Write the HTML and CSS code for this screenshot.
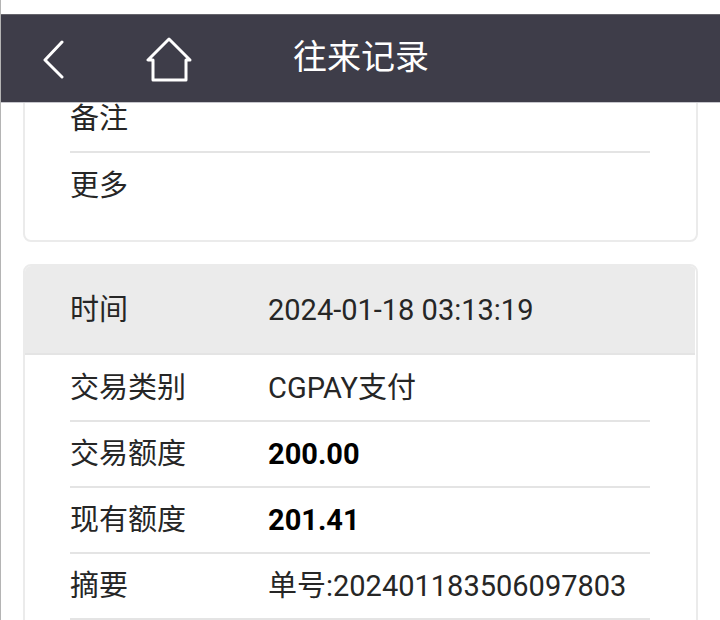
FILE: index.html
```html
<!DOCTYPE html>
<html lang="zh-CN">
<head>
  <meta charset="UTF-8">
  <meta name="viewport" content="width=device-width, initial-scale=1.0">
  <title>往来记录</title>
  <link rel="stylesheet" href="styles.css">
</head>
<body>
  <header class="topbar">
    <button type="button" class="icon-btn back" aria-label="返回">
      <svg width="24" height="40" viewBox="0 0 24 40"><path d="M21 3 4 21l17 17"/></svg>
    </button>
    <a href="#" class="icon-btn home" aria-label="首页">
      <svg width="46" height="46" viewBox="0 0 46 46"><path d="M23 3 2 24h5v20h33V24h4z"/></svg>
    </a>
    <h1>往来记录</h1>
  </header>

  <main class="records">
    <section class="card card-prev">
      <dl>
        <div class="row"><dt>备注</dt><dd></dd></div>
        <div class="row"><dt>更多</dt><dd></dd></div>
      </dl>
    </section>

    <section class="card card-open">
      <dl>
        <div class="row row-head"><dt>时间</dt><dd>2024-01-18 03:13:19</dd></div>
        <div class="row"><dt>交易类别</dt><dd>CGPAY支付</dd></div>
        <div class="row"><dt>交易额度</dt><dd class="amount">200.00</dd></div>
        <div class="row"><dt>现有额度</dt><dd class="amount">201.41</dd></div>
        <div class="row"><dt>摘要</dt><dd>单号:202401183506097803</dd></div>
      </dl>
    </section>
  </main>
</body>
</html>
```

FILE: styles.css
```css
* {
  box-sizing: border-box;
}
body {
  margin: 0;
  height: 100vh;
  overflow: hidden;
  padding-top: 14px;
  border-left: 1px solid #b4b4b4;
  background: #fff;
  color: #262626;
  font-family: Roboto, "Noto Sans CJK SC", sans-serif;
  font-size: 29px;
  line-height: 34px;
}
/* stays above the scrolled records */
.topbar {
  position: relative;
  z-index: 1;
  display: flex;
  align-items: center;
  height: 88px;
  margin-left: -1px;
  padding: 0 40px;
  border-top: 1px solid #66656c;
  border-left: 1px solid #34333d;
  background: #3e3d49;
  box-shadow: 0 1px 0 #c6c6cc;
  color: #fff;
}
.icon-btn {
  display: flex;
  padding: 0;
  border: 0;
  background: none;
}
.icon-btn svg {
  fill: none;
  stroke: #fff;
  stroke-width: 3;
  stroke-linecap: round;
  stroke-linejoin: round;
}
.home {
  margin-left: 81px;
}
h1 {
  margin: 0 0 0 101px;
  padding-bottom: 4px;
  font-size: 34px;
  font-weight: 400;
  line-height: 40px;
}
.records {
  padding: 0 22px;
}
.card {
  margin-bottom: 22px;
  border: 2px solid #ebebeb;
  border-radius: 8px;
  overflow: hidden;
}
.card-prev {
  margin-top: -17px;
  padding-bottom: 21px;
}
.card-open {
  padding-bottom: 22px;
}
dl {
  margin: 0;
}
.row {
  display: flex;
  align-items: center;
  height: 66px;
  margin: 0 46px 0 45px;
  border-bottom: 2px solid #e4e4e4;
}
.card-prev .row:last-child {
  border-bottom: 0;
}
.row-head {
  height: 89px;
  margin: 0 1px 1px 0;
  padding: 0 45px;
  background: #ebebeb;
}
dt {
  width: 198px;
}
dd {
  margin: 0;
}
.amount {
  color: #000;
  font-weight: 700;
}
```
